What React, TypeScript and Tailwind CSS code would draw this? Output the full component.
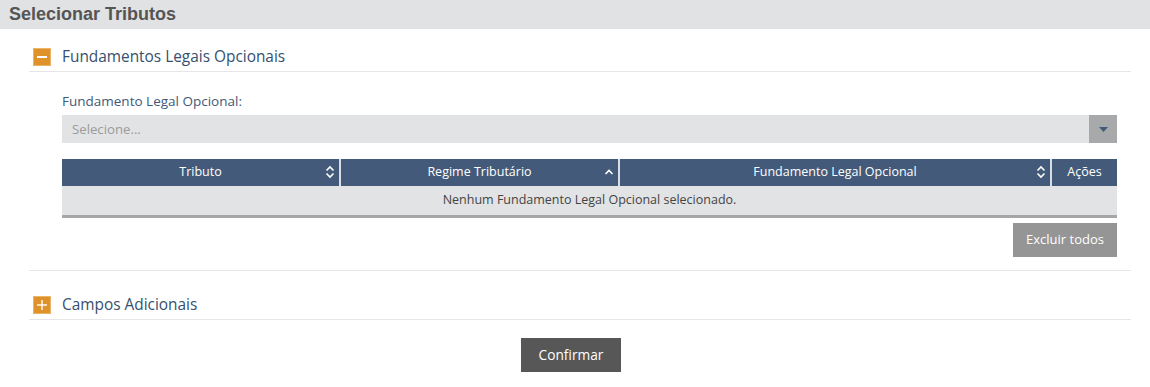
import React from 'react';

const SortBoth: React.FC = () => (
  <svg width="10" height="14" viewBox="0 0 10 14" fill="none" stroke="white" strokeWidth="1.6">
    <path d="M1.5 5.5 L5 2 L8.5 5.5" />
    <path d="M1.5 8.5 L5 12 L8.5 8.5" />
  </svg>
);

const SortUp: React.FC = () => (
  <svg width="10" height="14" viewBox="0 0 10 14" fill="none" stroke="white" strokeWidth="1.6">
    <path d="M1.5 9 L5 5.5 L8.5 9" />
  </svg>
);

const ToggleIcon: React.FC<{ open: boolean }> = ({ open }) => (
  <span className="w-[18px] h-[18px] bg-[#e0922a] border border-[#eab46a] flex items-center justify-center">
    <svg width="12" height="12" viewBox="0 0 12 12" stroke="white" strokeWidth={open ? 2 : 1.4}>
      <path d="M1 6 H11" />
      {!open && <path d="M6 1 V11" />}
    </svg>
  </span>
);

const SectionHeader: React.FC<{ title: string; open: boolean }> = ({ title, open }) => (
  <div className="h-[29px] flex items-center pl-[4px] gap-[11px] border-b border-[#e6e6e6]">
    <ToggleIcon open={open} />
    <span className="text-[15.4px] text-[#35506f]">{title}</span>
  </div>
);

const columns = [
  { label: 'Tributo', w: 'w-[277px]', sort: 'both' },
  { label: 'Regime Tributário', w: 'w-[279px]', sort: 'up' },
  { label: 'Fundamento Legal Opcional', w: 'w-[432px]', sort: 'both' },
  { label: 'Ações', w: 'flex-1', sort: '' },
];

const App: React.FC = () => {
  return (
    <div className="w-[1150px] h-[387px] bg-white" style={{ fontFamily: '"Open Sans", sans-serif' }}>
      {/* Top bar */}
      <div className="h-[29px] bg-[#e1e2e4] pl-[9px] flex items-center">
        <h1 className="text-[18px] font-bold text-[#555555]" style={{ fontFamily: '"Liberation Sans", Arial, sans-serif' }}>
          Selecionar Tributos
        </h1>
      </div>

      <div className="ml-[29px] mr-[19px]">
        {/* Fundamentos Legais Opcionais */}
        <div className="pt-[14px] pb-[13px] border-b border-[#e6e6e6]">
          <SectionHeader title="Fundamentos Legais Opcionais" open />
          <div className="pl-[33px] pr-[14px]">
            <div className="pt-[19px] text-[13.5px] leading-[20px] text-[#43597a]">Fundamento Legal Opcional:</div>
            <div className="mt-[4px] h-[28px] bg-[#e2e3e5] flex">
              <span className="flex-1 pl-[10px] text-[13.2px] leading-[28px] text-[#9b9b9b]">Selecione...</span>
              <span className="w-[28px] bg-[#a8a9ab] flex items-center justify-center">
                <svg width="9" height="5" viewBox="0 0 9 5">
                  <path d="M0 0 H9 L4.5 5 Z" fill="#42597a" />
                </svg>
              </span>
            </div>

            {/* Table */}
            <div className="mt-[16px]">
              <div className="h-[27px] bg-[#435a7a] flex text-white text-[12.5px]">
                {columns.map((c, i) => (
                  <div
                    key={c.label}
                    className={`${c.w} relative flex items-center justify-center ${i > 0 ? 'border-l-2 border-[#d9dee5]' : ''}`}
                  >
                    <span>{c.label}</span>
                    {c.sort && (
                      <span className="absolute right-[4px] top-[6px]">
                        {c.sort === 'both' ? <SortBoth /> : <SortUp />}
                      </span>
                    )}
                  </div>
                ))}
              </div>
              <div className="h-[32px] bg-[#e2e3e5] border-b-[3px] border-[#a6a6a6] flex items-center justify-center text-[12.5px] text-[#444444]">
                Nenhum Fundamento Legal Opcional selecionado.
              </div>
            </div>

            <div className="flex justify-end mt-[5px]">
              <button className="w-[104px] h-[34px] bg-[#959595] text-white text-[13px]">Excluir todos</button>
            </div>
          </div>
        </div>

        {/* Campos Adicionais */}
        <div className="pt-[20px]">
          <SectionHeader title="Campos Adicionais" open={false} />
        </div>
      </div>

      <div className="flex justify-center pr-[8px] mt-[18px]">
        <button className="w-[100px] h-[34px] bg-[#575757] text-white text-[13.7px]">Confirmar</button>
      </div>
    </div>
  );
};

export default App;
